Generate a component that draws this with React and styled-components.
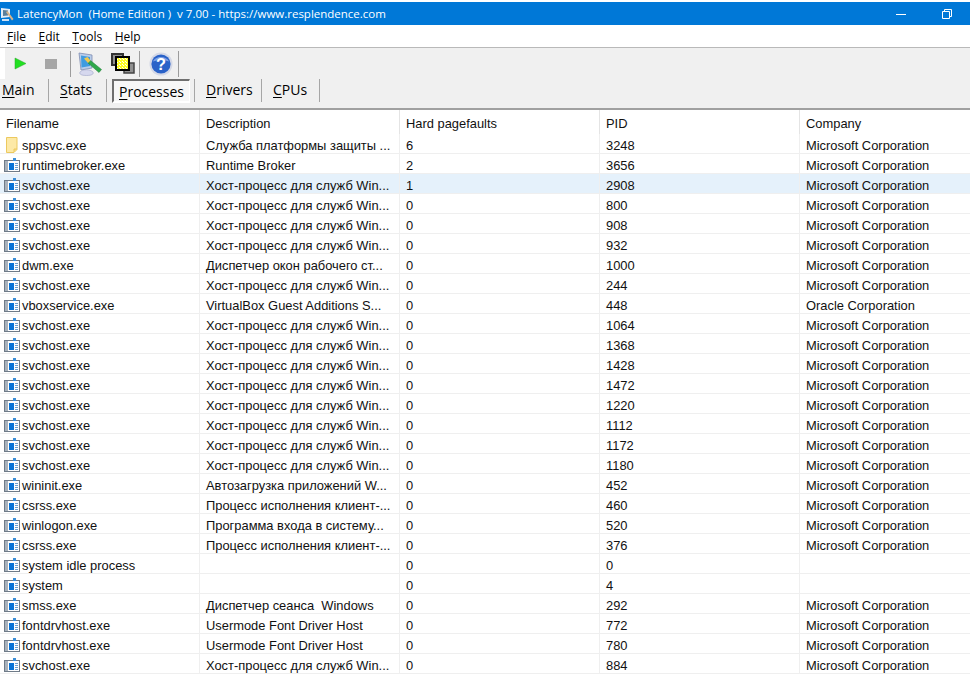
import styled, { createGlobalStyle } from 'styled-components'

const GlobalStyle = createGlobalStyle`
html, body {
    margin: 0;
    padding: 0;
    background: #fff;
    overflow: hidden;
}
* { box-sizing: border-box; }
`

const Window = styled.div`
width: 970px;
height: 676px;
overflow: hidden;
display: flex;
flex-direction: column;
padding-top: 2px;
font-family: "Liberation Sans", Arial, sans-serif;
color: #000;
background: #fff;
`

const TitleBar = styled.div`
flex: 0 0 23px;
display: flex;
align-items: center;
background: #0078d7;
color: #fff;
font-family: "Open Sans", "Noto Sans", sans-serif;
font-size: 11.5px;
padding-left: 1px;
`

const TitleText = styled.span`
white-space: pre;
flex: 1 1 auto;
`

const WinButton = styled.div`
width: 46px;
height: 23px;
display: flex;
align-items: center;
justify-content: center;
`

const MenuBar = styled.div`
flex: 0 0 23px;
display: flex;
align-items: center;
gap: 12.5px;
padding-left: 7px;
background: #fff;
border-bottom: 1px solid #b9b9b9;
font-family: "Open Sans", "Noto Sans", sans-serif;
font-size: 12px;
`

const Underlined = styled.span`
text-decoration: underline;
text-underline-offset: 2px;
text-decoration-thickness: 1px;
`

const ToolArea = styled.div`
flex: 0 0 62px;
display: flex;
flex-direction: column;
background: #f0f0f0;
border-bottom: 2px solid #a0a0a0;
`

const Toolbar = styled.div`
flex: 0 0 31px;
display: flex;
align-items: center;
background: linear-gradient(90deg, #fff 0, #fff 5px, transparent 5px);
`

const ToolGroup = styled.div`
display: flex;
align-items: center;
gap: ${({ $gap }) => $gap || 0}px;
width: ${({ $w }) => $w}px;
padding-left: ${({ $pl }) => $pl || 0}px;
height: 26px;
border-right: 1px solid #9c9c9c;
`

const TabRow = styled.div`
flex: 1 1 auto;
display: flex;
align-items: flex-start;
`

const Tab = styled.div`
display: flex;
align-items: center;
height: 23px;
width: ${({ $w }) => $w}px;
padding-left: ${({ $left }) => $left || 0}px;
padding-bottom: 2px;
font-size: 14px;
font-family: "Open Sans", "Noto Sans", sans-serif;
border-right: 1px solid #a6a6a6;
border-left: ${({ $sep }) => $sep ? '1px solid #a6a6a6' : 'none'};
`

const ActiveTab = styled(Tab)`
height: 24px;
margin: 0 4px 0 5px;
padding-bottom: 0;
justify-content: center;
background: #f7f7f7;
border-top: 2px solid #6f6f6f;
border-left: 2px solid #6f6f6f;
border-right: 1px solid #fff;
border-bottom: 2px solid #fff;
`

const Table = styled.div`
flex: 1 1 auto;
display: flex;
flex-direction: column;
font-size: 12.9px;
color: #111;
`

const Row = styled.div`
display: grid;
grid-template-columns: 200px 200px 200px 200px 170px;
flex: 0 0 ${({ $header }) => $header ? 24 : 20}px;
align-items: stretch;
background: ${({ $selected }) => $selected ? '#e5f1fb' : '#fff'};
border-bottom: ${({ $header }) => $header ? 'none' : '1px solid #efefef'};
`

const Cell = styled.div`
display: flex;
align-items: center;
gap: ${({ $icon }) => $icon ? 2 : 0}px;
padding-left: ${({ $icon }) => $icon ? 4 : 6}px;
padding-top: 3px;
border-right: 1px solid ${({ $header }) => $header ? '#e4e4e4' : '#efefef'};
white-space: pre;
overflow: hidden;
&:last-child { border-right: none; }
`

const SmallIcon = styled.svg`
flex: 0 0 16px;
width: 16px;
height: 16px;
`

const AppIcon = () => (
    <SmallIcon viewBox="0 0 16 16">
        <rect x=".5" y="3.5" width="15" height="11" fill="#fff" stroke="#6f7b88" />
        <rect x="1" y="4" width="3" height="10" fill="#a9b2bc" />
        <rect x="5" y="6" width="5" height="7" fill="#0a73d6" />
        <rect x="11" y="6" width="3" height="1" fill="#6d9fd0" />
        <rect x="11" y="8" width="3" height="1" fill="#6d9fd0" />
        <rect x="11" y="10" width="3" height="1" fill="#6d9fd0" />
        <rect x="11" y="12" width="3" height="1" fill="#6d9fd0" />
        <rect x="9" y="1" width="3" height="3" fill="#3d8fd8" />
    </SmallIcon>
)

const FileIcon = () => (
    <SmallIcon viewBox="0 0 16 16">
        <path d="M2.5 .5h10.5v12l-3 3h-7.500z" fill="#fde9a6" stroke="#ecc95f" />
        <path d="M10 15v-3h3" fill="#f8d983" stroke="#ecc95f" />
    </SmallIcon>
)

const RestoreIcon = () => (
    <svg width="10" height="10" viewBox="0 0 10 10" fill="none" stroke="#fff">
        <path d="M.5 2.500h7v7h-7z" />
        <path d="M2.500 2.500v-2h7v7h-2" />
    </svg>
)

const MinimizeIcon = () => (
    <svg width="10" height="10" viewBox="0 0 10 10" stroke="#fff">
        <path d="M0 5.500h10" />
    </svg>
)

const LatencyIcon = () => (
    <SmallIcon viewBox="0 0 16 16">
        <path d="M0 2l9 1v8l-9 1z" fill="#e6edf6" />
        <path d="M2 4l5 .5v5l-5 .5z" fill="#5b7f9c" />
        <path d="M1 13h7v2h-7z" fill="#cfe2f5" />
        <path d="M5 6l1.500-1 6 8-1.500 1.500z" fill="#d8b48a" />
    </SmallIcon>
)

const PlayIcon = () => (
    <svg width="13" height="13" viewBox="0 0 13 13">
        <path d="M1 1l11 5.500-11 5.500z" fill="#22e022" stroke="#2aa52a" strokeWidth=".5" />
    </svg>
)

const StopIcon = () => (
    <svg width="12" height="10" viewBox="0 0 12 10">
        <rect width="12" height="10" fill="#a6a6a6" />
    </svg>
)

const MonitorIcon = () => (
    <svg width="24" height="24" viewBox="0 0 24 24">
        <path d="M1 1l13 2v13l-11 2z" fill="#b8cdea" stroke="#7f8bb0" strokeWidth=".8" />
        <path d="M3 3.500l9 1.500v9l-8.500 1.500z" fill="#3f9be0" />
        <path d="M2 20c3-3 10-3 13 0 1 2-1 3.500-6.500 3.500s-7.500-1.500-6.500-3.500z" fill="#d6d8ee" stroke="#a0a4c8" strokeWidth=".6" />
        <path d="M10 11l2.500-2.500 11 9-2.500 3z" fill="#2fa84a" stroke="#1d7a33" strokeWidth=".5" />
        <path d="M6 6.500l3.500-1.500 3 3.500-2.500 2.500z" fill="#f2c84b" />
    </svg>
)

const WindowsIcon = () => (
    <svg width="24" height="22" viewBox="0 0 24 22">
        <defs>
            <pattern id="dither" width="3" height="3" patternUnits="userSpaceOnUse">
                <rect width="3" height="3" fill="#ffff22" />
                <rect width="1" height="1" fill="#fff" />
                <rect x="2" y="2" width="1" height="1" fill="#fff" />
            </pattern>
        </defs>
        <rect x="1" y="1" width="11" height="11" fill="#909090" stroke="#333" strokeWidth="2" />
        <rect x="13" y="10" width="10" height="10" fill="#909090" stroke="#444" strokeWidth="1.500" />
        <rect x="5" y="4" width="13" height="13" fill="url(#dither)" stroke="#000" strokeWidth="2" />
    </svg>
)

const HelpIcon = () => (
    <svg width="24" height="24" viewBox="0 0 25 25">
        <circle cx="12.500" cy="12.500" r="12" fill="#d4d8e6" />
        <circle cx="12.500" cy="12.500" r="10" fill="#2a62c8" />
        <path d="M4 10c2-6 14-7 17 0-5-2-12-2-17 0z" fill="#7ea2e6" />
        <text x="12.500" y="18.500" textAnchor="middle" fontSize="17" fontWeight="700" fill="#fff" fontFamily="Liberation Sans">?</text>
    </svg>
)

const svchost = 'Хост-процесс для служб Win...'
const ms = 'Microsoft Corporation'

const rows = [
    ['sppsvc.exe', 'Служба платформы защиты ...', '6', '3248', ms],
    ['runtimebroker.exe', 'Runtime Broker', '2', '3656', ms],
    ['svchost.exe', svchost, '1', '2908', ms],
    ['svchost.exe', svchost, '0', '800', ms],
    ['svchost.exe', svchost, '0', '908', ms],
    ['svchost.exe', svchost, '0', '932', ms],
    ['dwm.exe', 'Диспетчер окон рабочего ст...', '0', '1000', ms],
    ['svchost.exe', svchost, '0', '244', ms],
    ['vboxservice.exe', 'VirtualBox Guest Additions S...', '0', '448', 'Oracle Corporation'],
    ['svchost.exe', svchost, '0', '1064', ms],
    ['svchost.exe', svchost, '0', '1368', ms],
    ['svchost.exe', svchost, '0', '1428', ms],
    ['svchost.exe', svchost, '0', '1472', ms],
    ['svchost.exe', svchost, '0', '1220', ms],
    ['svchost.exe', svchost, '0', '1112', ms],
    ['svchost.exe', svchost, '0', '1172', ms],
    ['svchost.exe', svchost, '0', '1180', ms],
    ['wininit.exe', 'Автозагрузка приложений W...', '0', '452', ms],
    ['csrss.exe', 'Процесс исполнения клиент-...', '0', '460', ms],
    ['winlogon.exe', 'Программа входа в систему...', '0', '520', ms],
    ['csrss.exe', 'Процесс исполнения клиент-...', '0', '376', ms],
    ['system idle process', '', '0', '0', ''],
    ['system', '', '0', '4', ''],
    ['smss.exe', 'Диспетчер сеанса  Windows', '0', '292', ms],
    ['fontdrvhost.exe', 'Usermode Font Driver Host', '0', '772', ms],
    ['fontdrvhost.exe', 'Usermode Font Driver Host', '0', '780', ms],
    ['svchost.exe', svchost, '0', '884', ms],
]

const App = () => (
    <Window>
        <GlobalStyle />
        <TitleBar>
            <LatencyIcon />
            <TitleText>LatencyMon  (Home Edition )  v 7.00 - https://www.resplendence.com</TitleText>
            <WinButton><MinimizeIcon /></WinButton>
            <WinButton><RestoreIcon /></WinButton>
        </TitleBar>
        <MenuBar>
            <span><Underlined>F</Underlined>ile</span>
            <span><Underlined>E</Underlined>dit</span>
            <span><Underlined>T</Underlined>ools</span>
            <span><Underlined>H</Underlined>elp</span>
        </MenuBar>
        <ToolArea>
            <Toolbar>
                <ToolGroup $w={71} $gap={18} $pl={14}>
                    <PlayIcon />
                    <StopIcon />
                </ToolGroup>
                <ToolGroup $w={69} $gap={9} $pl={7}>
                    <MonitorIcon />
                    <WindowsIcon />
                </ToolGroup>
                <ToolGroup $w={39} $pl={9}>
                    <HelpIcon />
                </ToolGroup>
            </Toolbar>
            <TabRow>
                <Tab $w={49} $left={2}><span><Underlined>M</Underlined>ain</span></Tab>
                <Tab $w={58} $left={11}><span><Underlined>S</Underlined>tats</span></Tab>
                <ActiveTab $w={78}><span><Underlined>P</Underlined>rocesses</span></ActiveTab>
                <Tab $w={68} $left={11} $sep><span><Underlined>D</Underlined>rivers</span></Tab>
                <Tab $w={58} $left={11}><span><Underlined>C</Underlined>PUs</span></Tab>
            </TabRow>
        </ToolArea>
        <Table>
            <Row $header>
                {['Filename', 'Description', 'Hard pagefaults', 'PID', 'Company'].map(h => (
                    <Cell key={h} $header>{h}</Cell>
                ))}
            </Row>
            {rows.map((r, i) => (
                <Row key={i} $selected={i === 2}>
                    <Cell $icon>
                        {i === 0 ? <FileIcon /> : <AppIcon />}
                        {r[0]}
                    </Cell>
                    <Cell>{r[1]}</Cell>
                    <Cell>{r[2]}</Cell>
                    <Cell>{r[3]}</Cell>
                    <Cell>{r[4]}</Cell>
                </Row>
            ))}
        </Table>
    </Window>
)

export default App
